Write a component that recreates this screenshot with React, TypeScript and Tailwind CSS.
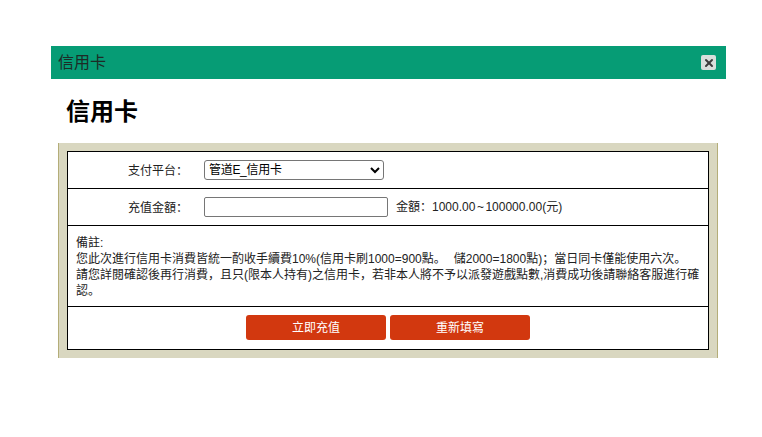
import { X } from "lucide-react"

const FONT = "font-['Liberation_Sans','Noto_Sans_CJK_SC',sans-serif]"

export default function App() {
  return (
    <div className={`h-[437px] w-[762px] overflow-hidden bg-white pl-[51px] pt-[46px] text-black ${FONT}`}>
      <div className="w-[675px]">
        {/* Title bar */}
        <div className="flex h-[33px] items-center justify-between bg-[#069c75] pl-[7px] pr-[10px]">
          <span className="text-[16px] text-[#1d2b26]">信用卡</span>
          <button className="flex h-[15px] w-[15px] items-center justify-center rounded-[2px] bg-[#d9dfdc]">
            <X className="h-[12px] w-[12px] text-[#3c3c3c]" strokeWidth={4} />
          </button>
        </div>

        <h1 className="mb-[16px] ml-[15px] mt-[18px] text-[24px] font-bold leading-[30px]">信用卡</h1>

        {/* Form panel */}
        <div className="ml-[7px] w-[660px] border-x border-x-[#b4ad78] bg-[#d9d7c0] p-2">
          <div className="flex flex-col border border-black bg-white text-[12px] text-[#222]">
            <div className="flex h-[37px] items-center border-b border-black">
              <span className="ml-[60px] w-[76px] pt-px">支付平台：</span>
              <select className="h-[20px] w-[180px] rounded-[3px] border border-[#767676] bg-white text-[12px] tracking-[-0.3px] text-black">
                <option>管道E_信用卡</option>
              </select>
            </div>
            <div className="flex h-[37px] items-center border-b border-black">
              <span className="ml-[60px] w-[76px] pt-px">充值金額：</span>
              <input className="h-[20px] w-[184px] rounded-[2px] border border-[#767676] bg-white" />
              <span className="ml-[8px]">
                金額：1000.00<span className="mx-[1.5px]">~</span>100000.00(元)
              </span>
            </div>
            <div className="h-[81px] border-b border-black px-2 pt-[9px] leading-[16px]">
              備註:
              <br />
              您此次進行信用卡消費皆統一酌收手續費10%(信用卡刷1000=900點<span className="mr-[8px]">。</span>儲2000=1800點)；當日同卡僅能使用六次。
              <br />
              請您詳閱確認後再行消費，且只(限本人持有)之信用卡，若非本人將不予以派發遊戲點數,消費成功後請聯絡客服進行確認。
            </div>
            <div className="flex h-[42px] items-center justify-center gap-1 pb-px">
              <button className="h-[25px] w-[140px] rounded-[3px] bg-[#d2380f] pt-px text-[12px] text-white">立即充值</button>
              <button className="h-[25px] w-[140px] rounded-[3px] bg-[#d2380f] pt-px text-[12px] text-white">重新填寫</button>
            </div>
          </div>
        </div>
      </div>
    </div>
  )
}
